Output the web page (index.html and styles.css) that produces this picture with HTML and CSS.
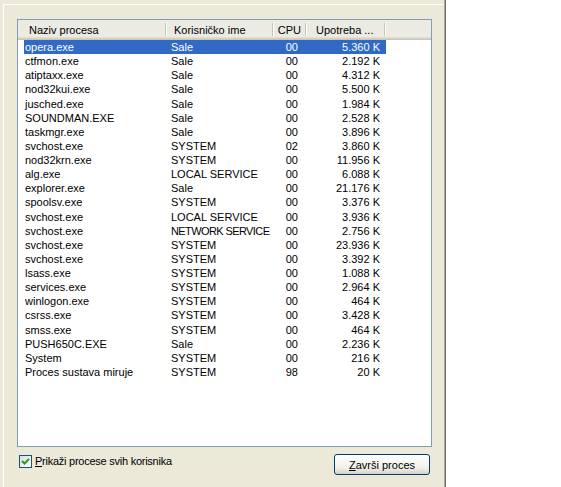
FILE: index.html
```html
<!DOCTYPE html>
<html>
<head>
<meta charset="utf-8">
<link rel="stylesheet" href="styles.css">
</head>
<body>
<div class="window">
  <div class="page">
    <div class="listbox">
      <div class="header">
        <div class="hcell c1">Naziv procesa</div>
        <div class="hcell c2">Korisničko ime</div>
        <div class="hcell c3">CPU</div>
        <div class="hcell c4">Upotreba ...</div>
        <div class="hcell rest"></div>
      </div>
      <div class="rows">
        <div class="row selected"><span class="c1">opera.exe</span><span class="c2">Sale</span><span class="c3">00</span><span class="c4">5.360 K</span></div>
        <div class="row"><span class="c1">ctfmon.exe</span><span class="c2">Sale</span><span class="c3">00</span><span class="c4">2.192 K</span></div>
        <div class="row"><span class="c1">atiptaxx.exe</span><span class="c2">Sale</span><span class="c3">00</span><span class="c4">4.312 K</span></div>
        <div class="row"><span class="c1">nod32kui.exe</span><span class="c2">Sale</span><span class="c3">00</span><span class="c4">5.500 K</span></div>
        <div class="row"><span class="c1">jusched.exe</span><span class="c2">Sale</span><span class="c3">00</span><span class="c4">1.984 K</span></div>
        <div class="row"><span class="c1">SOUNDMAN.EXE</span><span class="c2">Sale</span><span class="c3">00</span><span class="c4">2.528 K</span></div>
        <div class="row"><span class="c1">taskmgr.exe</span><span class="c2">Sale</span><span class="c3">00</span><span class="c4">3.896 K</span></div>
        <div class="row"><span class="c1">svchost.exe</span><span class="c2">SYSTEM</span><span class="c3">02</span><span class="c4">3.860 K</span></div>
        <div class="row"><span class="c1">nod32krn.exe</span><span class="c2">SYSTEM</span><span class="c3">00</span><span class="c4">11.956 K</span></div>
        <div class="row"><span class="c1">alg.exe</span><span class="c2">LOCAL SERVICE</span><span class="c3">00</span><span class="c4">6.088 K</span></div>
        <div class="row"><span class="c1">explorer.exe</span><span class="c2">Sale</span><span class="c3">00</span><span class="c4">21.176 K</span></div>
        <div class="row"><span class="c1">spoolsv.exe</span><span class="c2">SYSTEM</span><span class="c3">00</span><span class="c4">3.376 K</span></div>
        <div class="row"><span class="c1">svchost.exe</span><span class="c2">LOCAL SERVICE</span><span class="c3">00</span><span class="c4">3.936 K</span></div>
        <div class="row"><span class="c1">svchost.exe</span><span class="c2 tight">NETWORK SERVICE</span><span class="c3">00</span><span class="c4">2.756 K</span></div>
        <div class="row"><span class="c1">svchost.exe</span><span class="c2">SYSTEM</span><span class="c3">00</span><span class="c4">23.936 K</span></div>
        <div class="row"><span class="c1">svchost.exe</span><span class="c2">SYSTEM</span><span class="c3">00</span><span class="c4">3.392 K</span></div>
        <div class="row"><span class="c1">lsass.exe</span><span class="c2">SYSTEM</span><span class="c3">00</span><span class="c4">1.088 K</span></div>
        <div class="row"><span class="c1">services.exe</span><span class="c2">SYSTEM</span><span class="c3">00</span><span class="c4">2.964 K</span></div>
        <div class="row"><span class="c1">winlogon.exe</span><span class="c2">SYSTEM</span><span class="c3">00</span><span class="c4">464 K</span></div>
        <div class="row"><span class="c1">csrss.exe</span><span class="c2">SYSTEM</span><span class="c3">00</span><span class="c4">3.428 K</span></div>
        <div class="row"><span class="c1">smss.exe</span><span class="c2">SYSTEM</span><span class="c3">00</span><span class="c4">464 K</span></div>
        <div class="row"><span class="c1">PUSH650C.EXE</span><span class="c2">Sale</span><span class="c3">00</span><span class="c4">2.236 K</span></div>
        <div class="row"><span class="c1">System</span><span class="c2">SYSTEM</span><span class="c3">00</span><span class="c4">216 K</span></div>
        <div class="row"><span class="c1">Proces sustava miruje</span><span class="c2">SYSTEM</span><span class="c3">98</span><span class="c4">20 K</span></div>
      </div>
    </div>
    <div class="bottom">
      <label class="check">
        <span class="box"><svg width="11" height="11" viewBox="0 0 11 11"><path d="M2 5 L4.5 7.5 L9 3" fill="none" stroke="#21A121" stroke-width="2"/></svg></span>
        <span class="label"><u>P</u>rikaži procese svih korisnika</span>
      </label>
      <button class="btn"><u>Z</u>avrši proces</button>
    </div>
  </div>
</div>
</body>
</html>
```
FILE: styles.css
```css
html, body {
  margin: 0;
  padding: 0;
  background: #ffffff;
}
body {
  font-family: "Liberation Sans", Arial, sans-serif;
  font-size: 11px;
  color: #000;
}
.window {
  width: 445px;
  height: 487px;
  box-sizing: border-box;
  background: #ECE9D8;
  border-right: 1px solid #ACA899;
  box-shadow: 1px 0 0 #716F64;
  overflow: hidden;
}
.page {
  margin: 4px 0 0 3px;
  border-top: 1px solid #ffffff;
  border-left: 1px solid #ffffff;
  height: 482px;
}
.listbox {
  margin: 14px 0 0 13px;
  width: 415px;
  height: 428px;
  box-sizing: border-box;
  border: 1px solid #7F9DB9;
  background: #fff;
  overflow: hidden;
}
.header {
  display: flex;
  height: 20px;
  background: #EBEAE3;
  box-shadow: inset 0 -1px #CBC7B8, inset 0 -2px #D6D2C2, inset 0 -3px #E2DED1;
}
.hcell {
  position: relative;
  box-sizing: border-box;
  height: 20px;
  line-height: 20px;
  white-space: nowrap;
  overflow: hidden;
}
.hcell::after {
  content: "";
  position: absolute;
  right: 1px;
  top: 3px;
  bottom: 4px;
  width: 1px;
  background: #C7C5B2;
  box-shadow: 1px 0 0 #fff;
}
.hcell.rest::after { display: none; }
.hcell.c1 { width: 149px; padding-left: 11px; }
.hcell.c2 { width: 107px; padding-left: 7px; }
.hcell.c3 { width: 33px; text-align: right; padding-right: 6px; }
.hcell.c4 { width: 79px; padding-left: 9px; }
.hcell.rest { flex: 1; }
.rows {
  display: flex;
  flex-direction: column;
}
.row {
  display: flex;
  margin-left: 6px;
  width: 362px;
  height: 14.13px;
  line-height: 14px;
  white-space: nowrap;
}
.row span {
  box-sizing: border-box;
  overflow: hidden;
}
.row .c1 { width: 143px; padding-left: 1px; }
.row .c2 { width: 107px; padding-left: 4px; }
.row .c2.tight { letter-spacing: -0.6px; overflow: visible; }
.row .c3 { width: 33px; text-align: right; padding-right: 9px; }
.row .c4 { width: 79px; text-align: right; padding-right: 6px; }
.row.selected {
  background: #316AC5;
  color: #fff;
}
.bottom {
  display: flex;
  justify-content: space-between;
  align-items: flex-start;
  margin: 7px 0 0 13px;
  width: 415px;
}
.check {
  display: flex;
  align-items: center;
  margin: 1px 0 0 2px;
  height: 13px;
}
.box {
  width: 13px;
  height: 13px;
  box-sizing: border-box;
  border: 1px solid #1C5180;
  background: linear-gradient(135deg, #DCDCD7, #ffffff);
  display: flex;
  align-items: center;
  justify-content: center;
}
.label {
  margin-left: 3px;
  white-space: nowrap;
  line-height: 13px;
  letter-spacing: -0.25px;
}
.btn {
  margin-right: 2px;
  width: 96px;
  height: 21px;
  box-sizing: border-box;
  border: 1px solid #003C74;
  border-radius: 3px;
  background: linear-gradient(#FFFFFF, #F0F0EA 70%, #D6D0C5);
  font-family: "Liberation Sans", Arial, sans-serif;
  font-size: 11px;
  color: #000;
  padding: 0;
}
```
